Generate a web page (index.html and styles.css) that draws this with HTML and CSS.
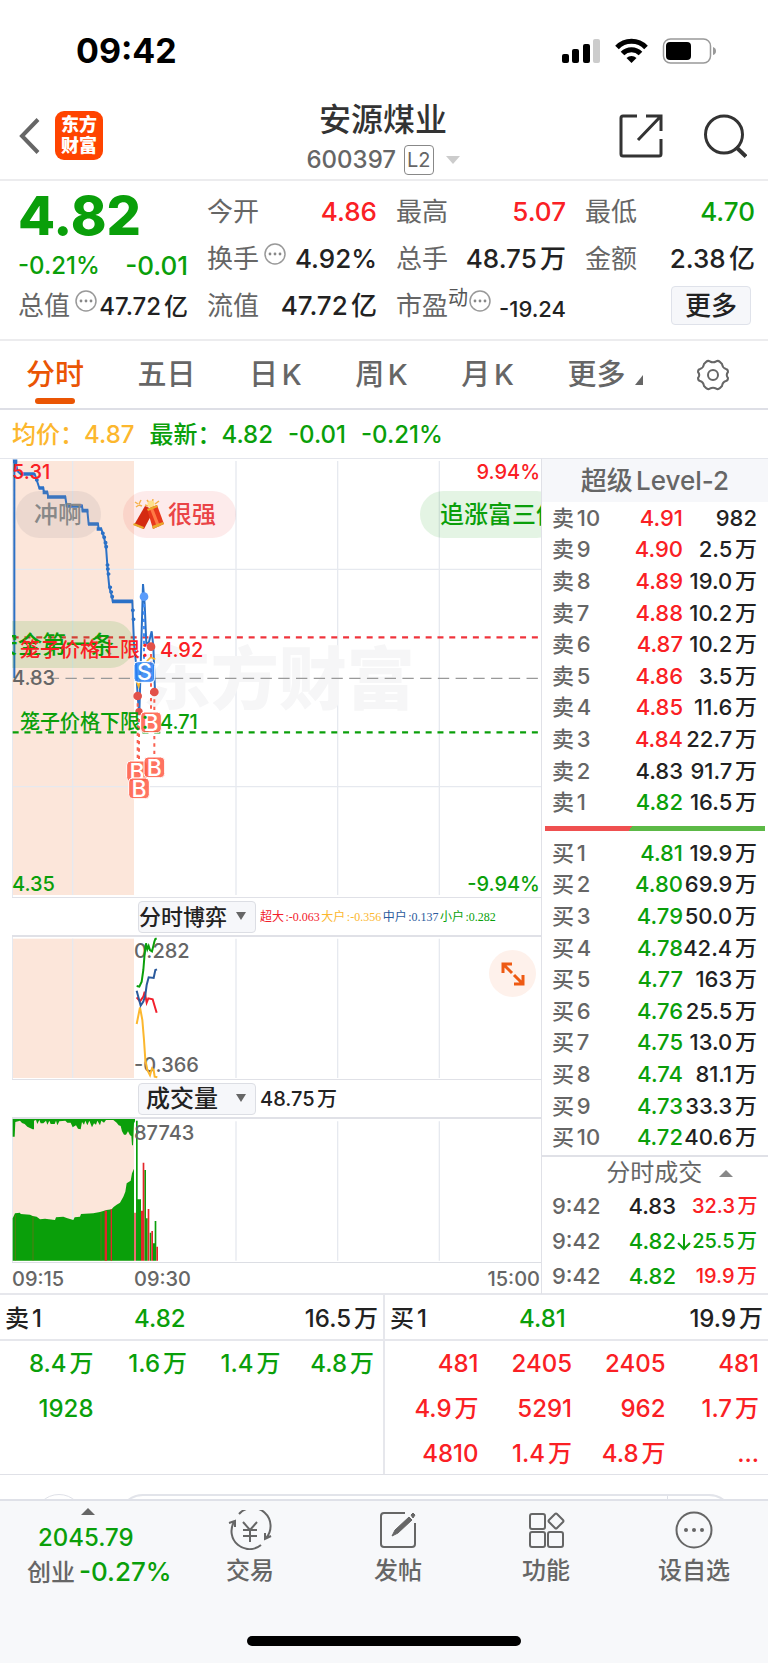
FILE: index.html
```html
<!DOCTYPE html>
<html lang="zh-CN">
<head>
  <meta charset="UTF-8" />
  <meta name="viewport" content="width=device-width, initial-scale=1.0" />
  <title>安源煤业 600397</title>
  <link rel="stylesheet" href="styles.css">
</head>
<body>

  <div class="status-bar">
    <span class="clock">09:42</span>
    <svg class="status-icons" width="156" height="26" viewBox="0 0 156 26">
      <rect x="0" y="16" width="7" height="9" rx="2" />
      <rect x="10" y="11" width="7" height="14" rx="2" />
      <rect x="21" y="6" width="7" height="19" rx="2" />
      <rect x="31" y="1" width="7" height="24" rx="2" fill="#ccc" />
      <g fill="none" stroke="#000" stroke-width="5">
        <path d="M55 9.500a20 20 0 0 1 29 0" />
        <path d="M60.500 15.500a12.500 12.500 0 0 1 18 0" />
      </g>
      <path d="M69.500 25l-5-5a7.500 7.500 0 0 1 10 0z" />
      <rect x="101.500" y="1" width="47" height="24" rx="7" fill="none" stroke="#999" stroke-width="1.500" />
      <rect x="104" y="4" width="25" height="18" rx="4" />
      <path d="M151 9q3 1 3 4t-3 4z" fill="#999" />
    </svg>
  </div>

  <header class="header">
    <div class="header-left">
      <button class="icon-btn" aria-label="返回">
        <svg width="21" height="36" viewBox="0 0 21 36"><path d="M19 1.500L3 18l16 16.500" fill="none" stroke="#666" stroke-width="4" /></svg>
      </button>
      <a class="logo" href="#">东方<br>财富</a>
    </div>
    <div class="title">
      <h1>安源煤业</h1>
      <p>600397 <span class="l2">L2</span> <i class="caret"></i></p>
    </div>
    <div class="header-right">
      <button class="icon-btn" aria-label="分享">
        <svg width="44" height="44" viewBox="0 0 44 44" fill="none" stroke="#333" stroke-width="3">
          <path d="M18 2H4Q2 2 2 4v36q0 2 2 2h36q2 0 2-2V25" />
          <path d="M27 2h15v15M41.500 2.500L19 26" />
        </svg>
      </button>
      <button class="icon-btn" aria-label="搜索">
        <svg width="44" height="44" viewBox="0 0 44 44" fill="none" stroke="#333" stroke-width="3">
          <circle cx="21" cy="20.500" r="18.500" />
          <path d="M33 33l10 9.500" stroke-width="4" />
        </svg>
      </button>
    </div>
  </header>

  <section class="quote">
    <div class="quote-col quote-main">
      <strong class="price down">4.82</strong>
      <div class="change down"><span>-0.21%</span><span>-0.01</span></div>
      <div class="item mid"><span class="name">总值</span><svg class="info" viewBox="0 0 22 22"><use href="#info" /></svg><b>47.72亿</b></div>
    </div>
    <div class="quote-col">
      <div class="item"><span class="name">今开</span><b class="up">4.86</b></div>
      <div class="item"><span class="name">换手</span><svg class="info" viewBox="0 0 22 22"><use href="#info" /></svg><b>4.92%</b></div>
      <div class="item"><span class="name">流值</span><b>47.72亿</b></div>
    </div>
    <div class="quote-col">
      <div class="item"><span class="name">最高</span><b class="up">5.07</b></div>
      <div class="item"><span class="name">总手</span><b>48.75万</b></div>
      <div class="item small"><span class="name">市盈</span><sup>动</sup><svg class="info" viewBox="0 0 22 22"><use href="#info" /></svg><b>-19.24</b></div>
    </div>
    <div class="quote-col">
      <div class="item"><span class="name">最低</span><b class="down">4.70</b></div>
      <div class="item"><span class="name">金额</span><b>2.38亿</b></div>
      <div class="item"><button class="more-btn">更多</button></div>
    </div>
    <svg width="0" height="0" class="defs">
      <defs>
        <g id="info">
          <circle cx="11" cy="11" r="10" fill="none" stroke="#999" stroke-width="1.500" />
          <g fill="#888"><circle cx="6" cy="11" r="1.400" /><circle cx="11" cy="11" r="1.400" /><circle cx="16" cy="11" r="1.400" /></g>
        </g>
      </defs>
    </svg>
  </section>

  <nav class="tabs">
    <button class="tab active">分时</button>
    <button class="tab">五日</button>
    <button class="tab">日K</button>
    <button class="tab">周K</button>
    <button class="tab">月K</button>
    <button class="tab tab-more">更多</button>
    <button class="icon-btn" aria-label="设置">
      <svg width="32" height="32" viewBox="0 0 32 32" fill="none" stroke="#666" stroke-width="2">
        <circle cx="16" cy="16" r="5" />
        <path d="M9 3q2-2 4-.5 3 1.500 6 0 2-1.500 4 .5l2 2q.5 4 4 5 2 .5 2 3v0q-2.500 3 0 6v0q0 2.500-2 3-3.500 1-4 5l-2 2q-2 2-4 .5-3-1.500-6 0-2 1.500-4-.5l-2-2q-.5-4-4-5-2-.5-2-3v0q2.500-3 0-6v0q0-2.500 2-3 3.500-1 4-5z" />
      </svg>
    </button>
  </nav>

  <p class="legend">
    <span class="avg">均价：4.87</span>
    <span>最新：4.82</span>
    <span>-0.01</span>
    <span>-0.21%</span>
  </p>

  <main class="board">
    <div class="charts">
      <div class="plot plot-price">
        <svg viewBox="36 27 1587 1314" preserveAspectRatio="none">
          <rect x="38" y="33" width="364" height="1302" fill="#fce6da" />
          <g stroke="#e6e9ef" stroke-width="4">
            <path d="M37 27v1314M218 33v1302M708 33v1302M1013 33v1302M1318 33v1302" />
            <path d="M38 358h1585M38 1010h1585" />
          </g>
          <text class="watermark" x="428" y="762">东方财富</text>
          <path d="M38 562h1585" stroke="#f0343c" stroke-width="7" stroke-dasharray="18 17.400" />
          <path d="M90 685h1533" stroke="#999" stroke-width="4" stroke-dasharray="34 19.200" />
          <path d="M38 847h1585" stroke="#0a9f0a" stroke-width="7" stroke-dasharray="18 17.400" />
          <g fill="none" stroke="#2b71c7" stroke-width="6">
            <path d="M43 685V33h4l5 30 10 9h42l6 18 8 24h12l2 13h10l3 14h51l4 27h46l2 14h14l4 40h28l2 15h8l8 25 6 28 4 55 2 27 4 40 8 28 2 14h59l2 54 3 72 6 60 5 100 5 50 11-388 5 60 5 120 8-6 8-32 5 45 5 135" />
            <path d="M62 72h42M116 114h16M128 127h16M141 141h57M199 168h49M245 182h20M264 222h32M290 237h16M336 454h63M39 34h13" stroke-width="11" />
            <path d="M110 90h1M308 250h1M312 262h1M316 278h1M318 290h1M322 345h1M323 357h1M325 372h1M330 412h1M333 426h1M336 440h1M398 481h1M400 508h1" stroke-width="11" stroke-linecap="round" />
          </g>
          <path d="M408 690l8 20 8-34 8-28 10-16 10-10 14 6" fill="none" stroke="#fcb72e" stroke-width="5" />
          <g stroke="#f9604f" stroke-width="6" stroke-dasharray="10 12">
            <path d="M413 738v200M417 785v200M453 590v200M463 726v200" />
          </g>
          <path d="M432 440v200" stroke="#3f8cf5" stroke-width="6" stroke-dasharray="10 12" />
          <circle cx="432" cy="440" r="13" fill="#5a9cfb" />
          <g fill="#e25149">
            <circle cx="453" cy="590" r="13" /><circle cx="463" cy="726" r="13" />
            <circle cx="413" cy="738" r="13" /><circle cx="417" cy="785" r="11" />
          </g>
          <g class="marks">
            <rect x="402" y="635" width="62" height="62" rx="12" class="sell" /><text x="433" y="691">S</text>
            <rect x="422" y="786" width="62" height="62" rx="12" /><text x="453" y="842">B</text>
            <rect x="380" y="933" width="62" height="62" rx="12" /><text x="411" y="989">B</text>
            <rect x="432" y="921" width="62" height="62" rx="12" /><text x="463" y="977">B</text>
            <rect x="386" y="984" width="62" height="62" rx="12" /><text x="417" y="1040">B</text>
          </g>
        </svg>
        <div class="danmaku gray">冲啊</div>
        <div class="danmaku red">
          <svg width="31" height="31" viewBox="0 0 31 31">
            <path d="M2 3l3 2M8 1l-2 4M3 8l3-2M9 7l-3-1M17 5l-3-4M19 5l1-5M22 5l4-3M15 7l-3-1" stroke="#f6b04a" stroke-width="1.500" />
            <circle cx="18" cy="5" r="3.500" fill="#fde08a" />
            <path d="M12 7l9 4-10 19-10-4z" fill="#d42a12" />
            <path d="M14 10L24 6l7 19-11 5z" fill="#e8381c" />
            <path d="M17 10l3-1 7 18-3 1z" fill="#ff7a45" />
            <path d="M14 10l10-4 1 2-10 4zM1 24l10 4-1 2-10-4zM19 27l11-4 1 2-11 5z" fill="#e9a92c" />
          </svg>
          很强
        </div>
        <div class="danmaku green-right">追涨富三倍</div>
        <div class="danmaku green-left">安全第一条</div>
        <span class="mark top-left up">5.31</span>
        <span class="mark top-right up">9.94%</span>
        <span class="mark limit-up up">笼子价格上限：4.92</span>
        <span class="mark base">4.83</span>
        <span class="mark limit-down down">笼子价格下限：4.71</span>
        <span class="mark bottom-left down">4.35</span>
        <span class="mark bottom-right down">-9.94%</span>
      </div>

      <div class="indicator">
        <div class="picker">
          <select aria-label="指标一"><option>分时博弈</option></select>
        </div>
        <p class="flows"><span class="c1">超大:-0.063</span><span class="c2">大户:-0.356</span><span class="c3">中户:0.137</span><span class="c4">小户:0.282</span></p>
      </div>
      <div class="plot plot-flow">
        <svg viewBox="36 141 1587 426" preserveAspectRatio="none">
          <rect x="38" y="146" width="364" height="418" fill="#fce6da" />
          <path d="M37 141v426M218 146v418M708 146v418M1013 146v418M1318 146v418" stroke="#e6e9ef" stroke-width="4" />
        </svg>
        <span class="mark value-top">0.282</span>
        <span class="mark value-bottom">-0.366</span>
        <svg class="over" viewBox="36 141 1587 426" preserveAspectRatio="none" fill="none" stroke-width="6">
          <path d="M410 402l10-50 7 38 5 60 4 60 6 30 8 16 6-21 5 5 3 20 8 2" stroke="#fcb72e" />
          <path d="M410 322l10 12 10-14 4-15 6 33 5-13 13 3 5 17 7 23" stroke="#f2202c" />
          <path d="M410 302l12 45 8-12 6-20 4-30 6-23 15 2 5-24 5-2" stroke="#2b5a9c" />
          <path d="M410 288l8 2 7-15 5-35 4-50 4-30 4 18 4-10 4 12 6 4 4-16 3-13 3-8 4-2" stroke="#0a9f0a" />
        </svg>
        <button class="expand" aria-label="全屏">
          <svg width="24" height="24" viewBox="0 0 24 24" fill="none" stroke="#ee5a13" stroke-width="3">
            <path d="M2 11V2h9M2 2l9 9M22 13v9h-9M22 22l-9-9" />
          </svg>
        </button>
      </div>

      <div class="indicator">
        <div class="picker center">
          <select aria-label="指标二"><option>成交量</option></select>
        </div>
        <p class="total">48.75万</p>
      </div>
      <div class="plot plot-volume">
        <svg viewBox="36 687 1587 429" preserveAspectRatio="none">
          <rect x="38" y="687" width="364" height="425" fill="#fce6da" />
          <path d="M37 687v429M218 694v418M708 694v418M1013 694v418M1318 694v418" stroke="#e6e9ef" stroke-width="4" />
          <g fill="#0a9f0a">
            <path d="M38 1112V985L45 970L60 968L62 972L90 974L98 978L110 980L120 988L135 986L165 990L168 982L190 980L200 984L220 990L224 982L240 980L243 972L280 970L300 966L320 960L335 958L340 952L350 944L360 938L370 920L376 905L380 880L392 872L396 850L402 836V1112z" />
            <path d="M38 687V740H44L46 696L60 692L66 699L74 702L82 710L98 718L102 718V692L108 690L112 702L118 690L122 700L130 700L138 692L142 704L148 692L152 702L164 702L168 692L172 706L178 694L196 692L202 698L212 698L218 712L228 706L234 716L242 718L246 696L252 704L256 692L262 706L268 692L276 712L282 700L288 704L292 692L300 706L304 692L312 698L318 690L340 690L350 698L356 706L362 708L366 724L372 734L378 734L384 724L390 736L394 738L396 766H399L402 700L405 694V687z" />
            <path d="M408 692h5v420h-5zM413 928h10v184h-10zM433 840h5v272h-5zM438 985h5v127h-5zM449 1028h5v84h-5zM459 1060h5v52h-5zM464 993h5v119h-5z" />
          </g>
          <path d="M46 975v137M99 980v132M303 967v145" stroke="#7d6b1c" stroke-width="2" />
          <path d="M403 968h4v144h-4zM423 962h5v150h-5zM428 818h5v294h-5zM443 957h5v155h-5zM454 1023h5v89h-5zM469 1070h5v42h-5zM314 962h7v150h-7zM332 958h4v154h-4z" fill="#e3262b" />
        </svg>
        <span class="mark value-top">87743</span>
      </div>
      <div class="time-axis"><span>09:15</span><span>09:30</span><span>15:00</span></div>
    </div>

    <aside class="ladder">
      <h2>超级Level-2</h2>
      <table class="levels">
        <tr><th>卖10</th><td class="up">4.91</td><td>982</td></tr>
        <tr><th>卖9</th><td class="up">4.90</td><td>2.5万</td></tr>
        <tr><th>卖8</th><td class="up">4.89</td><td>19.0万</td></tr>
        <tr><th>卖7</th><td class="up">4.88</td><td>10.2万</td></tr>
        <tr><th>卖6</th><td class="up">4.87</td><td>10.2万</td></tr>
        <tr><th>卖5</th><td class="up">4.86</td><td>3.5万</td></tr>
        <tr><th>卖4</th><td class="up">4.85</td><td>11.6万</td></tr>
        <tr><th>卖3</th><td class="up">4.84</td><td>22.7万</td></tr>
        <tr><th>卖2</th><td>4.83</td><td>91.7万</td></tr>
        <tr><th>卖1</th><td class="down">4.82</td><td>16.5万</td></tr>
      </table>
      <div class="ratio"></div>
      <table class="levels">
        <tr><th>买1</th><td class="down">4.81</td><td>19.9万</td></tr>
        <tr><th>买2</th><td class="down">4.80</td><td>69.9万</td></tr>
        <tr><th>买3</th><td class="down">4.79</td><td>50.0万</td></tr>
        <tr><th>买4</th><td class="down">4.78</td><td>42.4万</td></tr>
        <tr><th>买5</th><td class="down">4.77</td><td>163万</td></tr>
        <tr><th>买6</th><td class="down">4.76</td><td>25.5万</td></tr>
        <tr><th>买7</th><td class="down">4.75</td><td>13.0万</td></tr>
        <tr><th>买8</th><td class="down">4.74</td><td>81.1万</td></tr>
        <tr><th>买9</th><td class="down">4.73</td><td>33.3万</td></tr>
        <tr><th>买10</th><td class="down">4.72</td><td>40.6万</td></tr>
      </table>
      <div class="deals">
        <h3>分时成交 <i class="caret caret-up"></i></h3>
        <table>
          <tr><th>9:42</th><td>4.83</td><td class="arrow"></td><td class="up">32.3万</td></tr>
          <tr><th>9:42</th><td class="down">4.82</td><td class="arrow"><svg width="14" height="18" viewBox="0 0 14 18"><path d="M7 1v15M1 10l6 6 6-6" fill="none" stroke="#0a9f0a" stroke-width="2" /></svg></td><td class="down">25.5万</td></tr>
          <tr><th>9:42</th><td class="down">4.82</td><td class="arrow"></td><td class="up">19.9万</td></tr>
        </table>
      </div>
    </aside>
  </main>

  <section class="queues">
    <div class="queue">
      <div class="queue-head"><span>卖1</span><span class="down">4.82</span><span>16.5万</span></div>
      <table class="down">
        <tr><td>8.4万</td><td>1.6万</td><td>1.4万</td><td>4.8万</td></tr>
        <tr><td>1928</td><td></td><td></td><td></td></tr>
      </table>
    </div>
    <div class="queue">
      <div class="queue-head"><span>买1</span><span class="down">4.81</span><span>19.9万</span></div>
      <table class="up">
        <tr><td>481</td><td>2405</td><td>2405</td><td>481</td></tr>
        <tr><td>4.9万</td><td>5291</td><td>962</td><td>1.7万</td></tr>
        <tr><td>4810</td><td>1.4万</td><td>4.8万</td><td>...</td></tr>
      </table>
    </div>
  </section>

  <div class="peek">
    <div class="peek-circle"></div>
    <div class="peek-pill"><div></div></div>
  </div>

  <footer class="footer">
    <nav class="dock">
      <a class="index" href="#">
        <i class="caret caret-up"></i>
        <span class="index-value down">2045.79</span>
        <span>创业<b class="down">-0.27%</b></span>
      </a>
      <a href="#">
        <svg width="44" height="40" viewBox="0 0 44 40" fill="none" stroke="#666" stroke-width="2">
          <path d="M11 4A18 18 0 0 1 38 28M33 35A18 18 0 0 1 6 12M1 13l6-2v6M43 26l-6 3v-6" />
          <path d="M15 12l7 8 7-8M22 20v12M15 20h14M15 26h14" />
        </svg>
        <span>交易</span>
      </a>
      <a href="#">
        <svg width="40" height="40" viewBox="0 0 40 40" fill="none" stroke="#666" stroke-width="2">
          <path d="M27 3H6Q3 3 3 6v28q0 3 3 3h28q3 0 3-3V13" />
          <path d="M14 26l3-6L31 7l3 3-14 13zM33 5l2-2 2 2-2 3z" fill="#666" stroke-width="1" />
        </svg>
        <span>发帖</span>
      </a>
      <a href="#">
        <svg width="40" height="40" viewBox="0 0 40 40" fill="none" stroke="#666" stroke-width="2">
          <rect x="4" y="4" width="15" height="15" rx="2" />
          <rect x="4" y="22" width="15" height="15" rx="2" />
          <rect x="22" y="22" width="15" height="15" rx="2" />
          <path d="M29 4q1-1 2 0l6 6q1 1 0 2l-6 6q-1 1-2 0l-6-6q-1-1 0-2z" />
        </svg>
        <span>功能</span>
      </a>
      <a href="#">
        <svg width="40" height="40" viewBox="0 0 40 40">
          <circle cx="20" cy="20" r="17.500" fill="none" stroke="#666" stroke-width="2" />
          <g fill="#666"><circle cx="12" cy="20" r="2" /><circle cx="20" cy="20" r="2" /><circle cx="28" cy="20" r="2" /></g>
        </svg>
        <span>设自选</span>
      </a>
    </nav>
    <div class="home-bar"></div>
  </footer>

</body>
</html>
```

FILE: styles.css
```css
* { box-sizing: border-box; }

body {
  margin: 0;
  background: #fff;
  color: #222;
  font-family: Inter, "Noto Sans CJK SC", sans-serif;
  font-size: 24px;
  font-weight: 500;
  line-height: 32px;
  text-autospace: normal;
}

h1, h2, h3, p { margin: 0; font-weight: 500; }
b { font-weight: 500; }
th { font-weight: 500; text-align: left; }
table { border-collapse: collapse; width: 100%; }
td, th { padding: 0; white-space: nowrap; }
a { color: inherit; text-decoration: none; }
button, select { font: inherit; color: inherit; }
svg { display: block; flex: none; }

.up { color: #fa2024; }
.down { color: #0a9f0a; }

.icon-btn {
  display: block;
  padding: 0;
  border: none;
  background: none;
}

.caret {
  display: inline-block;
  border: 7px solid transparent;
  border-top: 8px solid #ccc;
  border-bottom: 0;
}

.caret-up {
  border-top: 0;
  border-bottom: 7px solid #888;
}

/* Status bar */
.status-bar {
  display: flex;
  justify-content: space-between;
  align-items: center;
  height: 92px;
  padding: 10px 50px 0 76px;
}

.clock {
  color: #000;
  font-size: 34px;
  font-weight: 700;
}

/* Header */
.header {
  display: grid;
  grid-template-columns: 1fr auto 1fr;
  align-items: center;
  height: 89px;
  padding: 0 21px 0 19px;
  border-bottom: 2px solid #ececee;
}

.header-left, .header-right {
  display: flex;
  align-items: center;
  gap: 15px;
}

.header-right {
  justify-content: flex-end;
  gap: 40px;
}

.logo {
  width: 48px;
  height: 49px;
  padding-top: 3px;
  border-radius: 9px;
  background: #ff4400;
  color: #fff;
  font-size: 18px;
  font-weight: 900;
  line-height: 21px;
  text-align: center;
}

.title {
  padding-top: 4px;
  text-align: center;
}

.title h1 {
  color: #333;
  font-size: 32px;
  line-height: 42px;
}

.title p {
  display: flex;
  align-items: center;
  justify-content: center;
  gap: 8px;
  margin-top: 3px;
  color: #666;
}

.l2 {
  height: 30px;
  padding: 0 2px;
  border: 1px solid #888;
  border-radius: 4px;
  font-size: 20px;
  font-weight: 400;
  line-height: 29px;
}

.title .caret { margin-left: 4px; }

/* Quote */
.quote {
  display: grid;
  grid-template-columns: repeat(4, 1fr);
  gap: 19px;
  padding: 7px 13px 10px 18px;
  border-bottom: 2px solid #ececee;
}

.defs { position: absolute; }

.item {
  display: flex;
  align-items: center;
  height: 47px;
  white-space: nowrap;
}

.item b {
  margin-left: auto;
  padding-top: 1px;
  font-size: 26px;
}

.item.mid b { font-size: 24px; padding-top: 2px; }
.item.small b { font-size: 22px; padding-top: 6px; }

.name {
  color: #666;
  font-size: 26px;
  font-weight: 400;
}

.info {
  width: 22px;
  height: 22px;
  margin: 0 0 10px 5px;
}

.item sup {
  margin-bottom: 16px;
  color: #555;
  font-size: 20px;
  font-weight: 400;
  line-height: 20px;
  vertical-align: baseline;
}

.item sup + .info { margin-left: 1px; }

.price {
  display: block;
  height: 52px;
  font-size: 54px;
  font-weight: 800;
  line-height: 56px;
}

.change {
  display: flex;
  justify-content: space-between;
  height: 42px;
  line-height: 51px;
}

.change span:last-child { font-size: 26px; }

.more-btn {
  width: 80px;
  height: 39px;
  margin: 0 4px 0 auto;
  padding: 0;
  border: 1px solid #dfe2ea;
  border-radius: 4px;
  background: #f6f7fa;
  font-size: 26px;
}

/* Period tabs */
.tabs {
  display: flex;
  justify-content: space-between;
  align-items: center;
  height: 69px;
  padding: 0 39px 0 26px;
  border-bottom: 2px solid #dedfe6;
}

.tab {
  position: relative;
  padding: 0;
  border: none;
  background: none;
  color: #666;
  font-size: 29px;
  line-height: 68px;
}

.tab.active { color: #ea5504; }

.tab.active::after {
  content: "";
  position: absolute;
  left: 50%;
  bottom: 5px;
  width: 40px;
  height: 6px;
  margin-left: -20px;
  border-radius: 3px;
  background: #ea5504;
}

.tab-more::after {
  content: "";
  display: inline-block;
  margin-left: 10px;
  border-left: 8px solid transparent;
  border-bottom: 10px solid #666;
}

.legend {
  display: flex;
  gap: 15px;
  padding: 0 12px;
  color: #0a9f0a;
  line-height: 50px;
  height: 48px;
}

.avg { color: #fcb72e; }

/* Charts and order ladder */
.board { display: flex; }

.charts {
  flex: 1;
  min-width: 0;
  padding-left: 12px;
  border-top: 1px solid #e4e6ec;
}

.plot {
  position: relative;
  overflow: hidden;
}

.plot > svg {
  width: 100%;
  height: 100%;
}

.plot .over {
  position: absolute;
  top: 0;
  left: 0;
}

.plot-price { height: 438px; }
.plot-flow { height: 142px; }
.plot-volume { height: 143px; }

.watermark {
  fill: #f6f6f7;
  font-size: 204px;
  font-weight: 900;
}

.marks rect { fill: #ff5a45; fill-opacity: .85; stroke: #fff; stroke-width: 3; }
.marks .sell { fill: #2a82f7; }

.marks text {
  fill: #fff;
  font-size: 69px;
  font-weight: 500;
  text-anchor: middle;
}

/* Labels drawn over the plots */
.mark {
  position: absolute;
  font-size: 20px;
  line-height: 24px;
}

.base, .value-top, .value-bottom { color: #666; }
.top-left { top: 1px; left: 0; }
.top-right { top: 1px; right: 1px; }
.bottom-left { bottom: 1px; left: 0; }
.bottom-right { bottom: 1px; right: 1px; }
.base { top: 207px; left: 0; }
.limit-up { top: 179px; left: 8px; }
.limit-down { top: 251px; left: 8px; }
.value-top { top: 2px; left: 122px; }
.value-bottom { bottom: 2px; left: 122px; }

.danmaku {
  position: absolute;
  display: flex;
  align-items: center;
  height: 47px;
  border-radius: 24px;
  white-space: nowrap;
}

.danmaku.gray {
  top: 32px;
  left: 4px;
  padding: 0 19px 0 18px;
  background: rgba(150, 140, 150, .15);
  color: #888;
}

.danmaku.red {
  top: 32px;
  left: 111px;
  gap: 4px;
  padding: 0 20px 0 10px;
  background: rgba(240, 60, 60, .1);
  color: #ea4446;
}

.danmaku.green-right {
  top: 32px;
  right: -19px;
  padding: 0 0 0 20px;
  background: rgba(10, 159, 10, .11);
  color: #0a9f0a;
}

.danmaku.green-left {
  top: 162px;
  left: -38px;
  padding: 0 20px;
  background: rgba(10, 159, 10, .12);
  color: #0a9f0a;
}

.expand {
  position: absolute;
  top: 13px;
  right: 5px;
  display: flex;
  align-items: center;
  justify-content: center;
  width: 47px;
  height: 47px;
  padding: 0;
  border: none;
  border-radius: 50%;
  background: #fef1eb;
}

.indicator {
  display: flex;
  align-items: center;
  gap: 4px;
  height: 40px;
  padding-left: 126px;
  border-top: 1px solid #e0e1e7;
  border-bottom: 2px solid #e0e1e7;
}

.picker {
  position: relative;
  width: 118px;
}

.picker::after {
  content: "";
  position: absolute;
  top: 11px;
  right: 10px;
  border: 5px solid transparent;
  border-top: 8px solid #666;
  border-bottom: 0;
  pointer-events: none;
}

.picker select {
  display: block;
  width: 100%;
  height: 32px;
  padding: 0;
  appearance: none;
  border: 1px solid #dcdee4;
  border-radius: 4px;
  background: #f6f7fa;
  font-size: 22px;
  line-height: 30px;
}

.picker.center select {
  padding-left: 7px;
  font-size: 24px;
}

.flows {
  font-family: "Liberation Serif", "Noto Sans CJK SC", serif;
  font-size: 12px;
  font-weight: 400;
  white-space: nowrap;
}

.c1 { color: #f2202c; }
.c2 { color: #fcb72e; }
.c3 { color: #2b5a9c; }
.c4 { color: #0a9f0a; }

.total { font-size: 20px; }

.time-axis {
  display: flex;
  height: 31px;
  border-top: 1px solid #dcdee4;
  color: #666;
  font-size: 20px;
}

.time-axis span:first-child { width: 122px; }
.time-axis span:last-child { margin-left: auto; padding-right: 1px; }

.ladder {
  width: 227px;
  border-left: 1px solid #e0e1e7;
  border-top: 1px solid #e4e6ec;
}

.ladder h2 {
  height: 43px;
  background: #f6f7fa;
  color: #666;
  font-size: 26px;
  line-height: 44px;
  text-align: center;
}

.levels {
  height: 316px;
  font-size: 22px;
  line-height: 30px;
  table-layout: fixed;
}

.levels th {
  width: 70px;
  padding-left: 10px;
  color: #666;
}

.levels td { text-align: right; }
.levels td:nth-child(2) { width: 71px; }
.levels td:last-child { padding-right: 11px; }

.ratio {
  height: 5px;
  margin: 8px 3px 6px;
  background: linear-gradient(125deg, #ef5050 39%, #5cb946 39%);
}

.deals {
  margin-top: 2px;
  border-top: 2px solid #e0e1e7;
}

.deals h3 {
  padding-right: 35px;
  color: #666;
  font-size: 24px;
  font-weight: 400;
  line-height: 32px;
  text-align: right;
}

.deals .caret { margin: 0 0 4px 10px; }

.deals table {
  font-size: 22px;
  line-height: 35px;
  table-layout: fixed;
}

.deals th {
  width: 60px;
  padding-left: 10px;
  color: #666;
}

.deals td { text-align: right; }
.deals td:nth-child(2) { width: 74px; }
.deals .arrow { width: 16px; }
.deals .arrow svg { margin: 0 auto; }
.deals td:last-child { padding-right: 11px; font-size: 20px; }

/* Order queues */
.queues {
  display: flex;
  height: 182px;
  margin-top: -1px;
  border-top: 2px solid #e6e7ec;
  border-bottom: 1px solid #e0e1e7;
}

.queue { flex: 1; }
.queue + .queue { border-left: 2px solid #e6e7ec; }

.queue-head {
  display: grid;
  grid-template-columns: 129px 1fr auto;
  height: 46px;
  padding: 0 5px;
  border-bottom: 2px solid #e6e7ec;
  line-height: 47px;
}

.queue table {
  width: calc(100% - 9px);
  table-layout: fixed;
  line-height: 45px;
}

.queue td {
  height: 45px;
  text-align: right;
}

/* Top edge of the comment bar that slides under the dock */
.peek {
  display: flex;
  gap: 34px;
  height: 24px;
  padding: 19px 34px 0;
  overflow: hidden;
}

.peek-circle {
  width: 50px;
  height: 50px;
  border: 1px solid #dfe1e8;
  border-radius: 50%;
}

.peek-pill {
  flex: 1;
  height: 50px;
  border: 2px solid #e2e4ea;
  border-radius: 25px;
}

.peek-pill div {
  width: 65px;
  height: 48px;
  margin-left: auto;
  border-left: 1px solid #dfe1e8;
}

/* Footer */
.footer {
  height: 165px;
  border-top: 2px solid #dfe1e8;
  background: #f7f8fa;
}

.dock {
  display: grid;
  grid-template-columns: 176px repeat(4, 1fr);
  height: 135px;
  color: #666;
}

.dock a {
  display: flex;
  flex-direction: column;
  align-items: center;
  padding-top: 9px;
}

.dock a > span { margin-top: 5px; }

.dock .index {
  align-items: flex-start;
  padding: 7px 0 0 27px;
}

.dock .index > span { margin-top: 0; line-height: 34px; }
.index .caret { margin-left: 54px; border-bottom-color: #666; }
.index .index-value { padding: 6px 0 0 11px; }

.index b {
  margin-left: 4px;
  font-size: 26px;
}

.home-bar {
  width: 274px;
  height: 10px;
  margin: 0 auto;
  border-radius: 5px;
  background: #000;
}
```
